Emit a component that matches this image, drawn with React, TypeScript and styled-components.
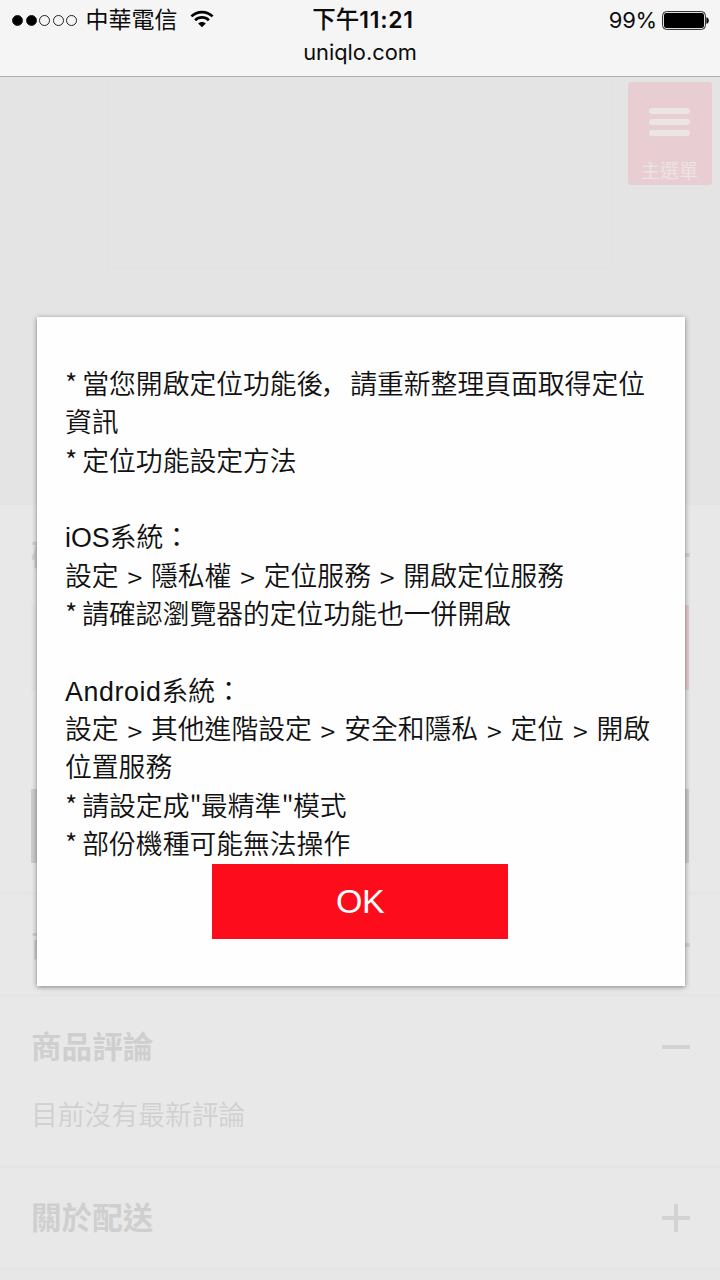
import React from 'react';
import styled, { createGlobalStyle, css } from 'styled-components';

const cjk = '"Noto Sans CJK TC", sans-serif';

const GlobalStyle = createGlobalStyle`
  *, *::before, *::after { box-sizing: border-box; }
  body {
    margin: 0;
    background: #e7e7e7;
    font-family: "Liberation Sans", ${cjk};
  }
  p, h2 { margin: 0; }
`;

const Screen = styled.div`
  position: relative;
  width: 720px;
  height: 1280px;
  overflow: hidden;
  display: flex;
  flex-direction: column;
`;

const BrowserBar = styled.header`
  flex: none;
  height: 77px;
  background: #f5f5f5;
  border-bottom: 1px solid #acaeac;
  color: #0c0c0c;
  font-family: Inter, ${cjk};
`;

const StatusRow = styled.div`
  display: grid;
  grid-template-columns: 1fr auto 1fr;
  align-items: center;
  height: 40px;
  padding: 0 11px 0 12px;
  font-size: 22px;
  line-height: 40px;
`;

const Carrier = styled.div`
  display: flex;
  align-items: center;
  font-size: 23px;
`;

const SignalDots = styled.div`
  display: flex;
  gap: 2.5px;
  margin-right: 8.5px;
`;

const Dot = styled.span<{ $filled?: boolean }>`
  width: 11px;
  height: 11px;
  border-radius: 50%;
  border: 1px solid #222;
  background: ${({ $filled }) => ($filled ? '#000' : 'transparent')};
`;

const WifiIcon = styled.svg`
  margin: -2px 0 0 12px;
`;

const Clock = styled.time`
  display: flex;
  align-items: center;
  font-weight: 600;
  font-size: 23px;
  letter-spacing: 0.7px;
  transform: translateX(2.5px);
`;

const ClockPeriod = styled.span`
  font-size: 23.5px;
  font-weight: 500;
  letter-spacing: 0;
`;

const Battery = styled.div`
  display: flex;
  align-items: center;
  justify-content: flex-end;
  gap: 5px;
  letter-spacing: -0.2px;
`;

const Address = styled.div`
  height: 26px;
  font-size: 21.8px;
  line-height: 25px;
  text-align: center;
`;

const Hero = styled.section`
  flex: none;
  height: 428px;
  display: flex;
  justify-content: flex-end;
  align-items: flex-start;
  padding: 5px 8px 0 0;
  background: #e4e4e4;
`;

const HeroFrame = styled.div`
  width: 505px;
  height: 192px;
  margin: -5px 16px 0 0;
  border: 1px solid #e1e1e1;
  border-top: 0;
`;

const MenuButton = styled.div`
  width: 84px;
  height: 103px;
  padding: 26px 1px 0 0;
  display: flex;
  flex-direction: column;
  align-items: center;
  border-radius: 3px;
  background: #e8cdd2;
  color: #ece3e4;
`;

const MenuLine = styled.span`
  width: 41px;
  height: 6px;
  margin-bottom: 5.5px;
  border-radius: 3px;
  background: #ece5e6;
`;

const MenuLabel = styled.span`
  margin-top: 18px;
  font-size: 19px;
  line-height: 26px;
`;

const Section = styled.section<{ $height: number }>`
  flex: none;
  height: ${({ $height }) => $height}px;
  padding: 0 31px;
  background: #e8e8e8;
  border-bottom: 3px solid #e5e5e5;
`;

const SectionHeader = styled.div`
  display: flex;
  align-items: center;
  justify-content: space-between;
  height: 100px;
  color: #cfcfcf;
`;

const SectionTitle = styled.h2`
  font-family: ${cjk};
  font-size: 30.6px;
  line-height: 40px;
  font-weight: 700;
  margin-bottom: 4px;
`;

const SectionText = styled.p`
  font-size: 26.8px;
  font-weight: 350;
  line-height: 39px;
  color: #d0d0d0;
`;

const Toggle = styled.span<{ $plus?: boolean }>`
  width: 28px;
  height: 28px;
  margin-right: -1px;
  background: linear-gradient(#d3d3d3, #d3d3d3) center / 28px 4px no-repeat
    ${({ $plus }) => $plus && css`, linear-gradient(#d3d3d3, #d3d3d3) center / 4px 28px no-repeat`};
`;

const ActionBar = styled.div<{ $muted?: boolean }>`
  height: ${({ $muted }) => ($muted ? 74 : 85)}px;
  margin-bottom: 99px;
  background: ${({ $muted }) => ($muted ? '#cdcdcd' : 'linear-gradient(90deg, #e4e4e4 50%, #e6cbcd 50%)')};
`;

const Dialog = styled.div`
  position: absolute;
  top: 317px;
  left: 36.5px;
  width: 648px;
  height: 669px;
  padding: 47px 28.5px 0;
  display: flex;
  flex-direction: column;
  align-items: center;
  background: #fefefe;
  box-shadow: 0 1px 5px rgba(0, 0, 0, 0.45);
`;

const Message = styled.div`
  width: 100%;
  color: #111;
  font-size: 26.8px;
  font-weight: 350;
  line-height: 38.35px;
`;

const MessageLine = styled.p`
  min-height: 38.35px;
  white-space: nowrap;
`;

const Comma = styled.span`
  position: relative;
  left: -3px;
  font-family: "Noto Sans CJK SC", sans-serif;
`;

const Wide = styled.span`
  letter-spacing: 0.6px;
`;

const Symbol = styled.span<{ $width: number; $drop: number }>`
  position: relative;
  top: ${({ $drop }) => $drop}px;
  display: inline-block;
  width: ${({ $width }) => $width}px;
  line-height: 1;
  text-align: center;
  font-family: ${cjk};
`;

const OkButton = styled.button`
  flex: none;
  width: 296px;
  height: 75px;
  margin-right: 1px;
  padding: 0;
  border: 0;
  background: #fd0d1b;
  color: #fff;
  font: 400 34px/75px "Liberation Sans", sans-serif;
  letter-spacing: -0.5px;
`;

const lines = [
  '* 當您開啟定位功能後，請重新整理頁面取得定位',
  '資訊',
  '* 定位功能設定方法',
  '',
  'iOS系統：',
  '設定 > 隱私權 > 定位服務 > 開啟定位服務',
  '* 請確認瀏覽器的定位功能也一併開啟',
  '',
  'Android系統：',
  '設定 > 其他進階設定 > 安全和隱私 > 定位 > 開啟',
  '位置服務',
  '* 請設定成"最精準"模式',
  '* 部份機種可能無法操作',
];

const symbols: Record<string, { width: number; drop: number }> = {
  '>': { width: 17.5, drop: 2.5 },
  '"': { width: 11.6, drop: 2 },
  '*': { width: 9.8, drop: 0 },
};

function renderLine(line: string) {
  return line.split(/([>"*，]|Android)/).map((part, i) => {
    if (part === '，') return <Comma key={i} lang="zh-Hans">{part}</Comma>;
    if (part === 'Android') return <Wide key={i}>{part}</Wide>;
    const symbol = symbols[part];
    return symbol ? <Symbol key={i} $width={symbol.width} $drop={symbol.drop}>{part}</Symbol> : part;
  });
}

function Accordion({ title, height, plus, children }: {
  title: string;
  height: number;
  plus?: boolean;
  children?: React.ReactNode;
}) {
  return (
    <Section $height={height}>
      <SectionHeader>
        <SectionTitle>{title}</SectionTitle>
        <Toggle $plus={plus} />
      </SectionHeader>
      {children}
    </Section>
  );
}

export default function App() {
  return (
    <Screen lang="zh-Hant">
      <GlobalStyle />
      <BrowserBar>
        <StatusRow>
          <Carrier>
            <SignalDots>
              {[0, 1, 2, 3, 4].map((i) => <Dot key={i} $filled={i < 2} />)}
            </SignalDots>
            中華電信
            <WifiIcon width="24" height="18" viewBox="0 0 24 18" fill="none" stroke="#000" strokeWidth="2.7">
              <path d="M1.4 6.4C7.3.6 16.7.6 22.6 6.4" />
              <path d="M5.1 10.2c3.9-3.7 9.9-3.7 13.8 0" />
              <path d="M12 17.2 8.2 13.5c2.1-2 5.5-2 7.6 0Z" fill="#000" stroke="none" />
            </WifiIcon>
          </Carrier>
          <Clock><ClockPeriod>下午</ClockPeriod>11:21</Clock>
          <Battery>
            99%
            <svg width="47" height="19" viewBox="0 0 47 19">
              <rect x="0.6" y="0.6" width="42.8" height="17.8" rx="3.8" fill="none" stroke="#222" strokeWidth="1" />
              <rect x="2" y="2" width="40" height="15" rx="2.2" fill="#000" />
              <path d="M44.4 6.2c3.2.5 3.2 6.1 0 6.6Z" fill="#000" />
            </svg>
          </Battery>
        </StatusRow>
        <Address>uniqlo.com</Address>
      </BrowserBar>

      <Hero>
        <HeroFrame />
        <MenuButton>
          <MenuLine />
          <MenuLine />
          <MenuLine />
          <MenuLabel>主選單</MenuLabel>
        </MenuButton>
      </Hero>

      <Accordion title="確" height={390}>
        <ActionBar />
        <ActionBar $muted />
      </Accordion>
      <Accordion title="商" height={102} />
      <Accordion title="商品評論" height={171}>
        <SectionText>目前沒有最新評論</SectionText>
      </Accordion>
      <Accordion title="關於配送" height={102} plus />

      <Dialog role="dialog">
        <Message>
          {lines.map((line, i) => <MessageLine key={i}>{renderLine(line)}</MessageLine>)}
        </Message>
        <OkButton>OK</OkButton>
      </Dialog>
    </Screen>
  );
}
